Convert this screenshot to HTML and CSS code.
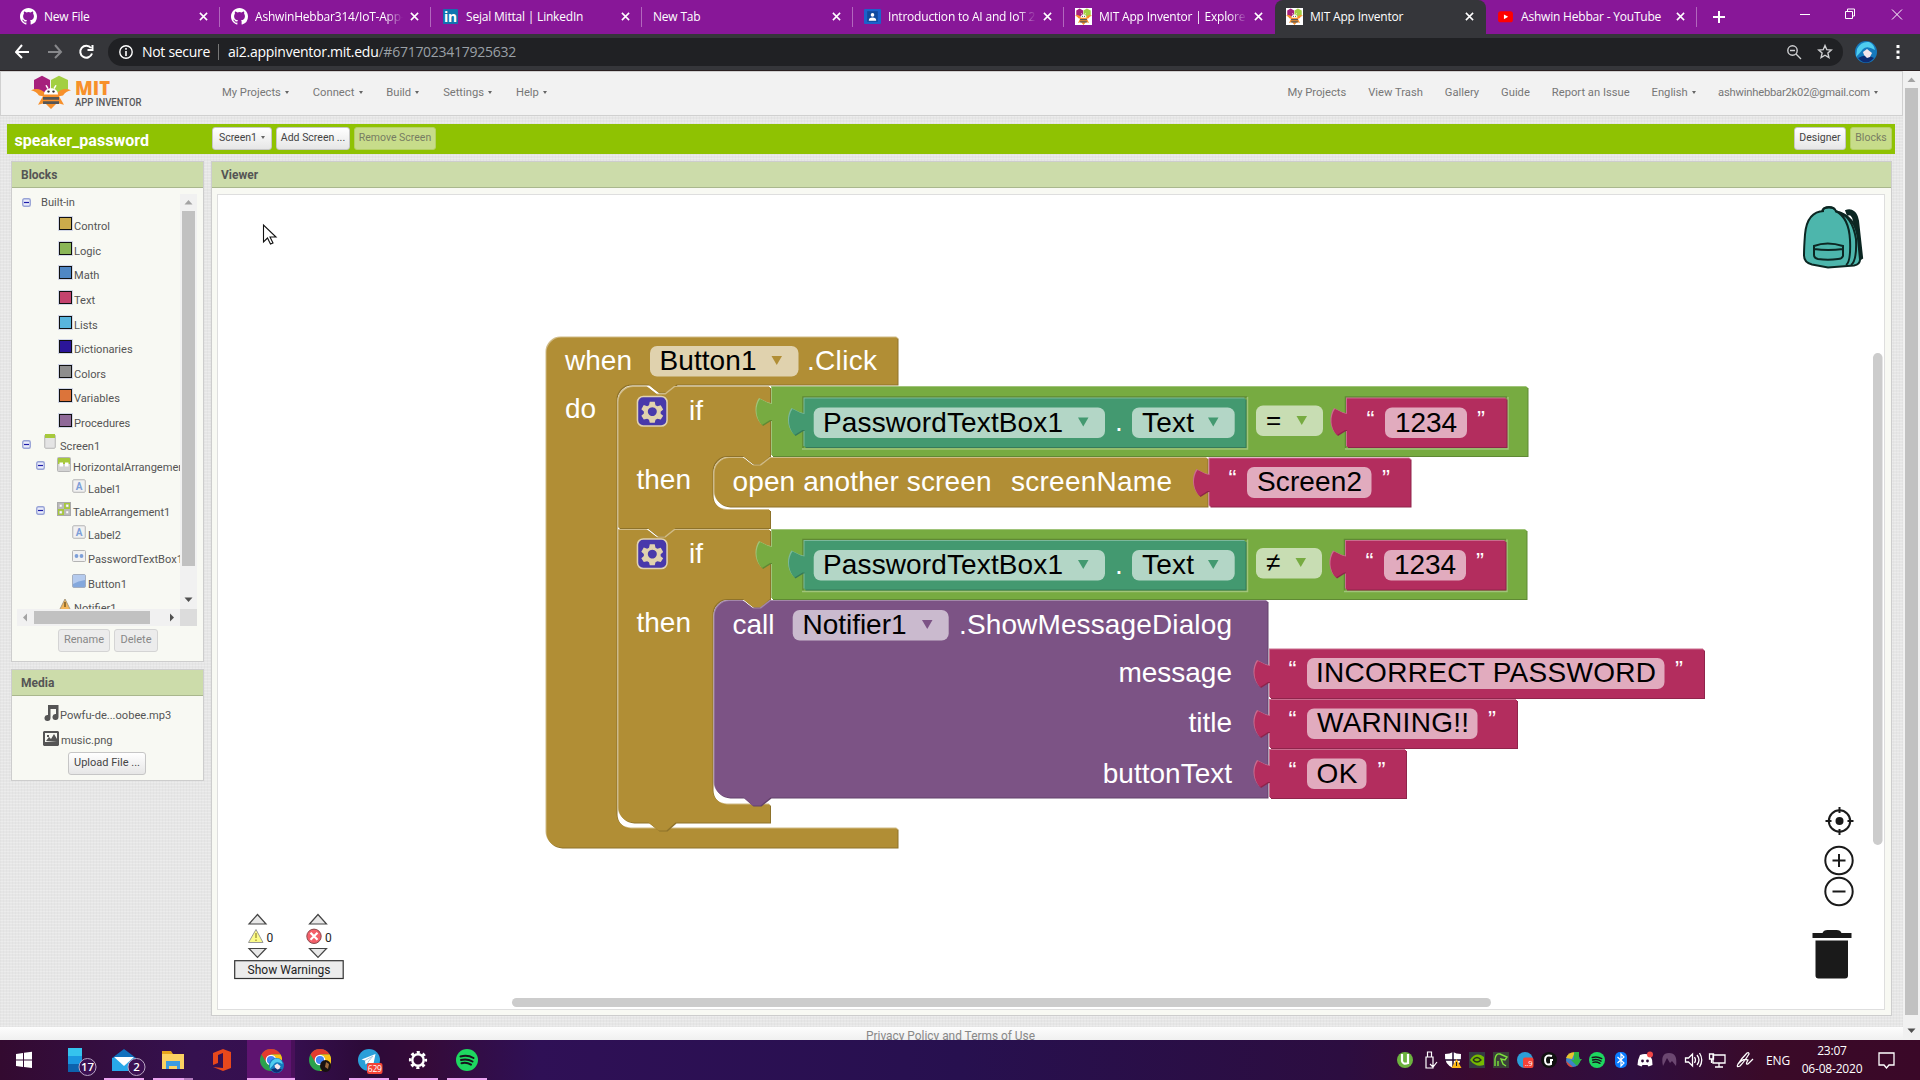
FILE: index.html
```html
<!DOCTYPE html>
<html lang="en">
<head>
<meta charset="utf-8">
<title>MIT App Inventor</title>
<link rel="stylesheet" href="styles.css">
</head>
<body>
<svg class="defs" width="0" height="0">
  <defs>
    <symbol id="github" viewBox="0 0 16 16"><path fill="#fff" d="M8 0C3.58 0 0 3.58 0 8c0 3.54 2.29 6.53 5.47 7.59.4.07.55-.17.55-.38 0-.19-.01-.82-.01-1.49-2.01.37-2.53-.49-2.69-.94-.09-.23-.48-.94-.82-1.13-.28-.15-.68-.52-.01-.53.63-.01 1.08.58 1.23.82.72 1.21 1.87.87 2.33.66.07-.52.28-.87.51-1.07-1.78-.2-3.64-.89-3.64-3.95 0-.87.31-1.59.82-2.15-.08-.2-.36-1.02.08-2.12 0 0 .67-.21 2.2.82a7.6 7.6 0 0 1 4 0c1.53-1.04 2.2-.82 2.2-.82.44 1.1.16 1.92.08 2.12.51.56.82 1.27.82 2.15 0 3.07-1.87 3.75-3.65 3.95.29.25.54.73.54 1.48 0 1.07-.01 1.93-.01 2.2 0 .21.15.46.55.38A8 8 0 0 0 16 8c0-4.42-3.58-8-8-8z"/></symbol>
    <symbol id="bee" viewBox="0 0 40 40"><path fill="#a6207c" d="M3 6 11 1l8 5v11l-8 5-8-5z"/><path fill="#a3cf42" d="M20 6l8-5 9 5v11l-9 5-8-5z"/><path fill="#f7902b" d="M0 18q8-4 14 3h12q6-7 14-3-5 1-8 6l-4 1 5 10-7-2-6 7-6-7-7 2 5-10-4-1q-3-5-8-6z"/><path fill="#fff" d="M13 23c0-10 14-10 14 0z"/><path fill="#555" d="M12 26h16v3H12zm0 5h16v3H12z"/><circle cx="17.500" cy="19.500" r="1.300" fill="#333"/><circle cx="22.500" cy="19.500" r="1.300" fill="#333"/><path d="m17 16-2-4m8 4 2-4" stroke="#fff" stroke-width="1.500"/></symbol>
    <symbol id="close" viewBox="0 0 10 10"><path d="m1 1 8 8m0-8-8 8" stroke="#fff" stroke-width="1.700"/></symbol>
    <symbol id="minus-box" viewBox="0 0 9 9"><rect x=".75" y=".75" width="7.500" height="7.500" rx="1.500" fill="#e9ecfa" stroke="#98a3d6" stroke-width="1.400"/><path d="M2 4.500h5" stroke="#1c1ca8" stroke-width="1.200"/></symbol>
    <symbol id="label" viewBox="0 0 14 14"><rect x=".75" y=".75" width="12.500" height="12.500" rx="1" fill="#f1f1f1" stroke="#b4b4b4"/><text x="7" y="10.500" text-anchor="middle" font-size="10" font-weight="700" fill="#7d9fd8" font-family="Roboto,sans-serif">A</text></symbol>
    <symbol id="spotify" viewBox="0 0 22 22"><circle cx="11" cy="11" r="11" fill="#1ed760"/><path d="M4.500 7.500q7-2 13 1.500M5 11q6-1.700 11.500 1.500M5.500 14.300q5-1.300 9.500 1.300" fill="none" stroke="#18121c" stroke-width="2" stroke-linecap="round"/></symbol>
    <symbol id="chrome" viewBox="0 0 22 22"><circle cx="11" cy="11" r="11" fill="#2ba24c"/><path fill="#e33b2e" d="M11 0a11 11 0 0 1 9.600 5.500H11L6.500 13.500 1.500 5.400A11 11 0 0 1 11 0z"/><path fill="#fbc116" d="M20.600 5.500A11 11 0 0 1 11 22l5-8.500L15.500 8 11 5.500z"/><circle cx="11" cy="11" r="5.300" fill="#fff"/><circle cx="11" cy="11" r="4.100" fill="#4285f4"/></symbol>
    <symbol id="telegram" viewBox="0 0 22 22"><circle cx="11" cy="11" r="11" fill="#2b9fd9"/><path fill="#fff" d="m3.500 10.500 14-5.500-2.500 12-5-3.500-2.500 2-.5-4z"/><path d="m7 11.500 8-4.500-5 6" fill="none" stroke="#a9c9dd"/></symbol>
    <symbol id="avatar" viewBox="0 0 22 22"><circle cx="11" cy="11" r="11" fill="#1679bd"/><path fill="#4ecdf0" d="M2 8q4-8 12-7 5 2 6 8-8-5-12-1-3 4-7 8z"/><path fill="#0d2c73" d="M3 17q8-5 16 0-8 9-16 0z"/><path fill="#f5e5ea" d="m8 11 4-3 5 4-2 4-3 1-3-3z"/></symbol>
    <symbol id="gear" viewBox="0 0 34 34"><rect x="1.500" y="1.500" width="30.500" height="30.500" rx="6" fill="#4839ab" stroke="#e0d2b2" stroke-width="1.600"/><path fill="#e0d2ae" fill-rule="evenodd" d="M14.200 7h5.100l.8 3.500 1.900 1.100 3.500-1.100 2.500 4.400-2.600 2.300v2l2.600 2.300-2.500 3.800-3.500-.9-1.900 1.100-.8 3.200h-5.100l-.8-3.200-1.900-1.100-3.500.9-2.500-3.800L8.100 19v-2l-2.600-2.300L8 10.400l3.500 1.200 1.900-1.100zM16.800 12.500a4.600 4.600 0 1 0 .01 0z"/></symbol>

    <path id="b-when" d="M560.500 336.500H896.500V383.500H675.500l-9 8h-9l-10-8H630.500a15 15 0 0 0-15 15V812.500a15 15 0 0 0 15 15H896.500V846.500H560.500a15 15 0 0 1-15-15V351.500a15 15 0 0 1 15-15z"/>
    <path id="b-if1" d="M617.500 527V401a15 15 0 0 1 15-15H646.500l9.500 7.500h8.500l9.500-7.500H769V455l-9 8h-8l-10-8H726.500a15 15 0 0 0-15 15V494a15 15 0 0 0 15 15H769V527H674.500l-9 8h-9l-10-8z"/>
    <path id="b-if2" d="M617.500 529H646.500l9.500 7.500h8.500l9.500-7.500H769V598l-9 8h-8l-10-8H726.500a15 15 0 0 0-15 15V788.500a15 15 0 0 0 15 15H769V821.500H674.500l-9 8h-8l-10-8H632.500a15 15 0 0 1-15-15z"/>
    <path id="b-open" d="M728.500 457H742.500l9.500 7.500h8l9.500-7.500H1206.500V505.500H728.500a15 15 0 0 1-15-15V472a15 15 0 0 1 15-15z"/>
    <path id="b-call" d="M728.500 600H742.500l9.500 7.500h8l9.500-7.500H1266.500V796.500H769.500l-10 8h-8l-9-8H728.500a15 15 0 0 1-15-15V615a15 15 0 0 1 15-15z"/>
    <path id="b-eq" d="M771 386H1526.500V455H771V419h-2l-8 5c-7-7-7-19-2-26l8 4 4 1z"/>
    <path id="b-neq" d="M771 529H1525.500V598H771V562h-2l-8 5c-7-7-7-19-2-26l8 4 4 1z"/>
    <path id="b-prop" d="M803.500 397.500H1244.500V446H803.500V429h-2l-8 5c-7-7-7-19-2-26l8 4 4 1z"/>
    <path id="b-num" d="M1346 397.500H1505.500V446H1346V429h-2l-8 5c-7-7-7-19-2-26l8 4 4 1z"/>
    <path id="b-scr" d="M1208.500 457.500H1409.500V505.500H1208.500V490h-2l-8 5c-7-7-7-19-2-26l8 4 4 1z"/>
    <path id="b-msg" d="M1269 648.500H1703V697H1269V681h-2l-8 5c-7-7-7-19-2-26l8 4 4 1z"/>
    <path id="b-title" d="M1269 699H1516V747H1269V731h-2l-8 5c-7-7-7-19-2-26l8 4 4 1z"/>
    <path id="b-ok" d="M1269 749H1405V797H1269V781h-2l-8 5c-7-7-7-19-2-26l8 4 4 1z"/>
    <path id="arrow" d="M-5.500-4H5L-.25 5z"/>
  </defs>
</svg>

<header class="tabs">
  <div class="tab"><svg class="fav" width="17" height="17"><use href="#github"/></svg><span>New File</span><svg class="x"><use href="#close"/></svg></div>
  <div class="tab"><svg class="fav" width="17" height="17"><use href="#github"/></svg><span class="fade">AshwinHebbar314/IoT-App-</span><svg class="x"><use href="#close"/></svg></div>
  <div class="tab"><svg class="fav" width="16" height="16" viewBox="0 0 16 16"><path fill="#0f75b0" d="M1 1h14v14H1z"/><text x="8" y="13" text-anchor="middle" font-size="13" font-weight="700" fill="#fff" font-family="Open Sans,sans-serif">in</text></svg><span>Sejal Mittal | LinkedIn</span><svg class="x"><use href="#close"/></svg></div>
  <div class="tab bare"><span>New Tab</span><svg class="x"><use href="#close"/></svg></div>
  <div class="tab"><svg class="fav" width="16" height="16" viewBox="0 0 16 16"><rect y="1" width="16" height="14" rx="1" fill="#1b62cb"/><path fill="#104a9d" d="M3 3h10v10H3z"/><circle cx="8" cy="6.500" r="1.700" fill="#fff"/><path fill="#fff" d="M4.500 12q0-3 3.500-3t3.500 3z"/></svg><span class="fade">Introduction to AI and IoT 2</span><svg class="x"><use href="#close"/></svg></div>
  <div class="tab last"><svg class="fav onwhite" width="16" height="16"><use href="#bee"/></svg><span class="fade">MIT App Inventor | Explore M</span><svg class="x"><use href="#close"/></svg></div>
  <div class="tab active"><svg class="fav onwhite" width="16" height="16"><use href="#bee"/></svg><span>MIT App Inventor</span><svg class="x"><use href="#close"/></svg></div>
  <div class="tab"><svg class="fav" width="16" height="16" viewBox="0 0 16 16"><rect x="1" y="3" width="14" height="10.500" rx="2.500" fill="#f00"/><path fill="#fff" d="m6.500 6 4 2.300-4 2.300z"/></svg><span>Ashwin Hebbar - YouTube</span><svg class="x"><use href="#close"/></svg></div>
  <svg class="newtab" width="12" height="12"><path d="M6 0v12M0 6h12" stroke="#fff" stroke-width="2"/></svg>
  <svg class="winctl" width="110" height="28" viewBox="0 0 110 28"><g fill="none" stroke="#fff"><path d="M6 14.500h10M51.500 11.500h7v7h-7zM53.500 11v-2h7v7h-2M98 9.500l10 10m0-10-10 10"/></g></svg>
</header>

<nav class="toolbar">
  <svg width="96" height="24" viewBox="0 0 96 24"><g fill="none" stroke="#fff" stroke-width="2"><path d="M14 12H1m6-7-6 7 6 6"/><path d="M33 12h13m-6-7 6 7-6 6" stroke="#87888b"/><path d="M76 8a6 6 0 1 0 1 5.500M77.500 5v5h-5"/></g></svg>
  <div class="omnibox">
    <svg width="14" height="14" viewBox="0 0 14 14"><circle cx="7" cy="7" r="6.200" fill="none" stroke="#fff" stroke-width="1.400"/><path d="M7 6v5M7 3v1.700" stroke="#fff" stroke-width="1.600"/></svg>
    <span class="secure">Not secure</span><span class="url"><b>ai2.appinventor.mit.edu</b>/#6717023417925632</span>
    <svg class="obicons" width="48" height="18" viewBox="0 0 48 18"><g fill="none" stroke="#cfd0d2" stroke-width="1.400"><circle cx="6.500" cy="7.500" r="4.700"/><path d="m10 11 5 5M4 7.500h5"/><path d="m39 2.500 1.800 4.200 4.500.4-3.400 3 1 4.400-3.900-2.300-3.900 2.300 1-4.400-3.400-3 4.500-.4z"/></g></svg>
  </div>
  <svg class="avatar" width="22" height="22"><use href="#avatar"/></svg>
  <svg width="4" height="14" viewBox="0 0 4 14"><path fill="#fff" d="M.5 0h3v3h-3zm0 5.500h3v3h-3zm0 5.500h3v3h-3z"/></svg>
</nav>

<div class="page">
  <div class="content">
    <div class="menubar">
      <svg class="logo" width="114" height="36" viewBox="0 0 114 36"><svg x="0" y="0" width="40" height="34" preserveAspectRatio="none" viewBox="0 0 40 40"><use href="#bee"/></svg><text x="44" y="19.500" textLength="35" lengthAdjust="spacingAndGlyphs" font-size="20" font-weight="800" fill="#f7902b">MIT</text><text x="44" y="31" textLength="66.500" lengthAdjust="spacingAndGlyphs" font-size="10.500" font-weight="500" fill="#58585a" font-family="Roboto,sans-serif">APP INVENTOR</text></svg>
      <div class="menu left"><span>My Projects <i></i></span><span>Connect <i></i></span><span>Build <i></i></span><span>Settings <i></i></span><span>Help <i></i></span></div>
      <div class="menu right"><span>My Projects</span><span>View Trash</span><span>Gallery</span><span>Guide</span><span>Report an Issue</span><span>English <i></i></span><span class="mail">ashwinhebbar2k02@gmail.com <i></i></span></div>
    </div>

    <div class="project">
      <h1>speaker_password</h1>
      <button class="btn w60">Screen1 <i></i></button><button class="btn w74">Add Screen ...</button><button class="btn off w82">Remove Screen</button>
      <button class="btn push w52">Designer</button><button class="btn off w42">Blocks</button>
    </div>

    <main class="columns">
      <aside>
        <section class="panel blocks">
          <h2>Blocks</h2>
          <div class="pane">
            <div class="tree">
              <div class="row builtin"><svg class="tg"><use href="#minus-box"/></svg><span>Built-in</span></div>
              <div class="row cat"><b class="sw control"></b><span>Control</span></div>
              <div class="row cat"><b class="sw logic"></b><span>Logic</span></div>
              <div class="row cat"><b class="sw math"></b><span>Math</span></div>
              <div class="row cat"><b class="sw text"></b><span>Text</span></div>
              <div class="row cat"><b class="sw lists"></b><span>Lists</span></div>
              <div class="row cat"><b class="sw dict"></b><span>Dictionaries</span></div>
              <div class="row cat"><b class="sw colors"></b><span>Colors</span></div>
              <div class="row cat"><b class="sw vars"></b><span>Variables</span></div>
              <div class="row cat"><b class="sw procs"></b><span>Procedures</span></div>
              <div class="row screen"><svg class="tg"><use href="#minus-box"/></svg><svg class="ic" width="12" height="15" viewBox="0 0 12 15"><rect x=".75" y=".75" width="10.500" height="13.500" rx="1" fill="#e4e4e4" stroke="#b5b5b5"/><path fill="#a7c93c" d="M1 0h10v4H1z"/></svg><span>Screen1</span></div>
              <div class="row harr"><svg class="tg"><use href="#minus-box"/></svg><svg class="ic" width="14" height="15" viewBox="0 0 14 15"><rect x=".5" y=".5" width="13" height="14" rx="1" fill="#d3d3d3" stroke="#b5b5b5"/><path fill="#a7c93c" d="M1 1h12v6H1z"/><path fill="#fff" d="M2.500 5.500h3.500v4H2.500zm5.500 0h3.500v4H8z"/></svg><span>HorizontalArrangement1</span></div>
              <div class="row leaf h22"><svg class="ic" width="14" height="14"><use href="#label"/></svg><span>Label1</span></div>
              <div class="row tarr"><svg class="tg"><use href="#minus-box"/></svg><svg class="ic" width="14" height="14" viewBox="0 0 14 14"><rect x=".5" y=".5" width="13" height="13" fill="#b9b9b9" stroke="#aaa"/><path fill="#a7c93c" d="M7 1h6v6H7zM1 7h6v6H1z"/><path fill="#fff" stroke="#bbb" stroke-width=".5" d="M2.500 2.500H5V5H2.500zm6.500 0h2.500V5H9zM2.500 9H5v2.500H2.500zM9 9h2.500v2.500H9z"/></svg><span>TableArrangement1</span></div>
              <div class="row leaf h22"><svg class="ic" width="14" height="14"><use href="#label"/></svg><span>Label2</span></div>
              <div class="row leaf h26"><svg class="ic" width="14" height="12" viewBox="0 0 14 12"><rect x=".5" y=".5" width="13" height="11" rx="1" fill="#f1f1f1" stroke="#b4b4b4"/><circle cx="4.500" cy="6" r="1.900" fill="#7d9fd8"/><circle cx="9.500" cy="6" r="1.900" fill="#7d9fd8"/></svg><span>PasswordTextBox1</span></div>
              <div class="row leaf h24"><svg class="ic" width="14" height="14" viewBox="0 0 14 14"><rect x=".5" y=".5" width="13" height="13" rx="1.500" fill="#84a8dc" stroke="#a5afc0"/><path fill="#b5cbee" d="M1 1h12v5Q6 7 1 10z"/></svg><span>Button1</span></div>
              <div class="row note h24"><svg class="ic" width="14" height="14" viewBox="0 0 14 14"><path fill="#f3b65a" stroke="#a89a80" d="m7 1 6 12H1z"/><path stroke="#7a5a20" d="M7 4v5" stroke-width="1.500"/></svg><span>Notifier1</span></div>
            </div>
            <div class="vsb"><svg width="17" height="415" viewBox="0 0 17 415"><path fill="#a3a3a3" d="m8.500 6 4 4.500h-8z"/><path fill="#c1c1c1" d="M2 17h13v355H2z"/><path fill="#505050" d="m8.500 408-4-4.500h8z"/></svg></div>
            <div class="hsb"><svg width="163" height="17" viewBox="0 0 163 17"><path fill="#a3a3a3" d="m6 8.500 4-4v8z"/><path fill="#c1c1c1" d="M17 2h116v13H17z"/><path fill="#505050" d="m157 8.500-4-4v8z"/></svg></div>
            <div class="corner"></div>
          </div>
          <div class="acts"><button class="btn off w52b">Rename</button><button class="btn off w43">Delete</button></div>
        </section>
        <section class="panel media">
          <h2>Media</h2>
          <div class="file"><svg width="16" height="16" viewBox="0 0 16 16"><path fill="#555" d="M5 0h10.500v12a3 3 0 1 1-2.500-3V4H7.500v9A3 3 0 1 1 5 10z"/></svg><span>Powfu-de...oobee.mp3</span></div>
          <div class="file two"><svg width="16" height="15" viewBox="0 0 16 15"><path fill="#555" fill-rule="evenodd" d="M1 0h14l1 1v13l-1 1H1l-1-1V1zm1 2v9h12V2zm1 8 3-4 2 2 3-5 3 5v3zm1-6h2v2H4z"/></svg><span>music.png</span></div>
          <button class="btn up">Upload File ...</button>
        </section>
      </aside>

      <section class="panel viewer">
        <h2>Viewer</h2>
        <div class="workspace">
          <svg class="canvas" width="1666" height="814" viewBox="218 195 1666 814">
            <g class="control"><use href="#b-when" class="lt"/><use href="#b-when" class="dk"/><use href="#b-when"/></g>
            <g class="control"><use href="#b-if1" class="lt"/><use href="#b-if1" class="dk"/><use href="#b-if1"/></g>
            <g class="control"><use href="#b-if2" class="lt"/><use href="#b-if2" class="dk"/><use href="#b-if2"/></g>
            <g class="control"><use href="#b-open" class="lt"/><use href="#b-open" class="dk"/><use href="#b-open"/></g>
            <g class="proc"><use href="#b-call" class="lt"/><use href="#b-call" class="dk"/><use href="#b-call"/></g>
            <g class="logic"><use href="#b-eq" class="lt"/><use href="#b-eq" class="dk"/><use href="#b-eq"/></g>
            <g class="logic"><use href="#b-neq" class="lt"/><use href="#b-neq" class="dk"/><use href="#b-neq"/></g>
            <g class="rim"><path class="d" d="M803 448V397H1247M1345.500 448V397H1507M803 590.500V539.500H1247M1344.500 590.500V539.500H1506"/><path class="l" d="M1247.500 397V449H802M1508 397V449H1345M1247.500 539.500V591.500H802M1507 539.500V591.500H1344"/></g>
            <g class="prop"><use href="#b-prop" class="lt"/><use href="#b-prop" class="dk"/><use href="#b-prop"/></g>
            <g class="prop" transform="translate(0 142.500)"><use href="#b-prop" class="lt"/><use href="#b-prop" class="dk"/><use href="#b-prop"/></g>
            <g class="str"><use href="#b-num" class="lt"/><use href="#b-num" class="dk"/><use href="#b-num"/></g>
            <g class="str" transform="translate(-1 142.500)"><use href="#b-num" class="lt"/><use href="#b-num" class="dk"/><use href="#b-num"/></g>
            <g class="str"><use href="#b-scr" class="lt"/><use href="#b-scr" class="dk"/><use href="#b-scr"/></g>
            <g class="str"><use href="#b-msg" class="lt"/><use href="#b-msg" class="dk"/><use href="#b-msg"/></g>
            <g class="str"><use href="#b-title" class="lt"/><use href="#b-title" class="dk"/><use href="#b-title"/></g>
            <g class="str"><use href="#b-ok" class="lt"/><use href="#b-ok" class="dk"/><use href="#b-ok"/></g>

            <g class="field">
              <rect x="650" y="346" width="148.500" height="30.500" rx="7"/>
              <rect x="813.700" y="407.500" width="291.300" height="30.500" rx="7"/><rect x="1132" y="407.500" width="102.700" height="30.500" rx="7"/><rect x="1256" y="405.500" width="67" height="30.500" rx="7"/><rect x="1385" y="407.500" width="82" height="30.500" rx="7"/>
              <rect x="1247" y="467" width="124.500" height="31" rx="7"/>
              <rect x="813.700" y="550" width="291.300" height="30.500" rx="7"/><rect x="1132" y="550" width="102.700" height="30.500" rx="7"/><rect x="1256" y="548" width="66" height="30.500" rx="7"/><rect x="1384" y="550" width="82" height="30.500" rx="7"/>
              <rect x="792.700" y="610" width="156" height="30.500" rx="7"/>
              <rect x="1307" y="658" width="357.500" height="31" rx="7"/><rect x="1307" y="708.500" width="170.500" height="30.500" rx="7"/><rect x="1307" y="758.500" width="59.500" height="30.500" rx="7"/>
            </g>
            <use href="#gear" x="635.500" y="395" width="34" height="33"/><use href="#gear" x="635.500" y="537.500" width="34" height="33"/>
            <g class="control"><use href="#arrow" x="777" y="360"/></g>
            <g class="prop"><use href="#arrow" x="1083.500" y="421.500"/><use href="#arrow" x="1213.500" y="421.500"/><use href="#arrow" x="1083.500" y="564"/><use href="#arrow" x="1213.500" y="564"/></g>
            <g class="logic"><use href="#arrow" x="1302" y="420"/><use href="#arrow" x="1301" y="562"/></g>
            <g class="proc"><use href="#arrow" x="927.500" y="624"/></g>
            <g class="bt">
              <text x="565" y="370" textLength="67">when</text><text x="807" y="370" textLength="70">.Click</text><text x="565" y="417.500">do</text>
              <text x="689" y="419.500">if</text><text x="636.500" y="489">then</text><text x="689" y="562.500">if</text><text x="636.500" y="632">then</text>
              <text x="732.500" y="490.500" textLength="259">open another screen</text><text x="1011" y="490.500" textLength="161">screenName</text>
              <text x="1115" y="431">.</text><text x="1115" y="574">.</text>
              <text x="732.500" y="633.500">call</text><text x="959" y="633.500" textLength="273">.ShowMessageDialog</text>
              <text x="1232" y="681.500" text-anchor="end">message</text><text x="1232" y="732" text-anchor="end">title</text><text x="1232" y="782.500" text-anchor="end">buttonText</text>
            </g>
            <g class="q">
              <text x="1370.500" y="427.500">“</text><text x="1481" y="427.500">”</text><text x="1232.500" y="486.500">“</text><text x="1386" y="486.500">”</text><text x="1369.500" y="570">“</text><text x="1480" y="570">”</text>
              <text x="1292.500" y="677.500">“</text><text x="1679" y="677.500">”</text><text x="1292.500" y="728">“</text><text x="1492" y="728">”</text><text x="1292.500" y="779">“</text><text x="1381.500" y="779">”</text>
            </g>
            <g class="ft">
              <text x="659.500" y="370" textLength="97">Button1</text>
              <text x="823" y="431.500" textLength="240">PasswordTextBox1</text><text x="1142" y="431.500" textLength="52">Text</text><text x="1266" y="428.500" font-size="26">=</text><text x="1395" y="431.500" textLength="62">1234</text>
              <text x="1257" y="490.500" textLength="105">Screen2</text>
              <text x="823" y="574" textLength="240">PasswordTextBox1</text><text x="1142" y="574" textLength="52">Text</text><text x="1266" y="571" font-size="26">≠</text><text x="1394" y="574" textLength="62">1234</text>
              <text x="802.500" y="633.500" textLength="104">Notifier1</text>
              <text x="1316" y="681.500" textLength="340">INCORRECT PASSWORD</text><text x="1317" y="732" textLength="152">WARNING!!</text><text x="1316.500" y="782.500" textLength="41">OK</text>
            </g>

            <g stroke="#0c2622" stroke-width="2" transform="translate(0 1)"><path fill="none" stroke-width="6" d="M1846 212q8-3 10 8l4 36-6 4-4-1"/><path fill="#4db6ac" d="M1822 210q1-3.500 7-3.500t7 4q19 4 22 27l2 21q0 5-6 6l-26 2-16-3q-8-2-8-9 0-8 1-21 2-23 19-23.500z"/><path fill="none" d="M1823 209q1-3 6-3t6 3M1836 210q13 7 14 29t-4 25m-9-53q15 3 19 27 1 22-5 26"/><path fill="#4db6ac" d="M1814 245q13-5 29 0v10q-1 3-5 3-10 1.500-20 0-4-1-4-4zM1814 248q14 2 29 0"/></g>
            <rect x="1873" y="353" width="9.500" height="492" rx="4.700" fill="#ccc"/><rect x="512" y="998" width="979" height="9" rx="4.500" fill="#ccc"/>
            <g fill="none" stroke="#1a1a1a" stroke-width="2"><circle cx="1839.500" cy="821" r="10.700"/><path d="M1839.500 807v6m0 16v6m-14-14h6m16 0h6"/><circle cx="1839" cy="860.500" r="13.700"/><path d="M1839 854v13m-6.500-6.500h13"/><circle cx="1839" cy="891.500" r="13.700"/><path d="M1832.500 891.500h13"/></g><circle cx="1839.500" cy="821" r="4" fill="#1a1a1a"/>
            <path fill="#1a1a1a" d="M1812.500 933h10q1-3 5-3h9q4 0 5 3h10v5h-39zM1815.500 940.500h32.500v35q0 3-3 3h-26.500q-3 0-3-3z"/>
            <g fill="#e8e8e8" stroke="#444" stroke-width="1.200"><path d="m257.500 914.500 8.500 9.500h-17zM318 914.500l8.500 9.500h-17zM249 948.500h17l-8.500 9zM309.500 948.500h17l-8.500 9z"/></g>
            <path d="m256 929.500 7 13h-14.500z" fill="#fbfb8b" stroke="#999" stroke-linejoin="round"/><path d="M256 933v5m0 1.500v1.500" stroke="#aaa03a" stroke-width="1.500"/>
            <circle cx="314" cy="936.300" r="7.200" fill="#f4606a" stroke="#8b4a4e"/><path d="m310.500 932.800 7 7m0-7-7 7" stroke="#fff" stroke-width="2.200"/>
            <g class="wt"><text x="266.500" y="941.500">0</text><text x="325" y="941.500">0</text><rect x="234.700" y="960.700" width="108.500" height="17.800" fill="#ececec" stroke="#333" stroke-width="1.200"/><text x="247.500" y="974" textLength="83">Show Warnings</text></g>
            <path d="M263.500 225v17l4-4 3 6 2.500-1-3-6h6z" fill="#fff" stroke="#111" stroke-width="1.100"/>
          </svg>
        </div>
      </section>
    </main>
    <footer>Privacy Policy and Terms of Use</footer>
  </div>
  <div class="scroll"><svg width="17" height="969" viewBox="0 0 17 969"><path fill="#a3a3a3" d="m8.500 6.500 4 4.500h-8z"/><path fill="#c1c1c1" d="M2 17h13v927H2z"/><path fill="#505050" d="m8.500 962-4-4.500h8z"/></svg></div>
</div>

<div class="taskbar">
  <svg class="apps" width="500" height="40" viewBox="0 0 500 40">
    <path fill="#5e1470" d="M247 0h48v40h-48z"/><path fill="#49105a" d="M291 0h4v37h-4z"/>
    <path fill="#fff" d="m16 14 7-1v6.500h-7zm8-1.200 8-1v7.700h-8zM16 20.500h7V27l-7-1zm8 0h8V28l-8-1z"/>
    <path fill="#35c3ee" d="M68 8h14v8H68z"/><path fill="#1b97e0" d="M68 16h14v8H68z"/><path fill="#0d62ad" d="M68 24h14v8H68z"/>
    <path fill="#1170bd" d="m112 18 12-9 12 9v3h-24z"/><path fill="#28a8ea" d="M112 18h24v13h-24z"/><path fill="#fff" d="M114 17h20l-10 9z"/>
    <path fill="#e6a51c" d="M162 11h9l2 3h11v6h-22z"/><path fill="#fbd161" d="M162 14h22v15h-22z"/><path fill="#3b9be0" d="M166 21h14v8h-3v-3h-8v3h-3z"/>
    <path fill="#e8481c" d="m223 9 8 3v16l-8 3-10-4 10 1V13l-5 2v8l-5 2V13z"/>
    <use href="#chrome" x="260" y="9" width="22" height="22"/><use href="#avatar" x="269" y="18" width="15" height="15"/>
    <use href="#chrome" x="309" y="9" width="22" height="22"/><ellipse cx="325.500" cy="26" rx="5.500" ry="6" fill="#17120f"/><path d="m326 22 3 2-1 5-3-2z" fill="#9b6a3c"/>
    <use href="#telegram" x="358" y="9" width="22" height="22"/><rect x="367" y="23" width="15.500" height="11" rx="2" fill="#f44336"/><text x="374.800" y="32" text-anchor="middle" font-size="8.500" fill="#fff" font-family="Open Sans,sans-serif">629</text>
    <circle cx="418" cy="20" r="5.700" fill="none" stroke="#fff" stroke-width="2.400"/><circle cx="418" cy="20" r="7.800" fill="none" stroke="#fff" stroke-width="2.600" stroke-dasharray="3.100 3.025" stroke-dashoffset="1.500"/>
    <use href="#spotify" x="456" y="9" width="22" height="22"/>
    <g fill="#3c1153" stroke="#b9a6c4"><circle cx="87.500" cy="27" r="8.500"/><circle cx="136.500" cy="27" r="8.500"/></g><g fill="#fff" font-size="11.500" text-anchor="middle" font-family="Open Sans,sans-serif" font-weight="600"><text x="87.500" y="31">17</text><text x="136.500" y="31">2</text></g>
    <path fill="#eba4f0" d="M104 38h40v2h-40zM153 38h31v2h-31zM247 38h48v2h-48zM349 38h40v2h-40zM398 38h40v2h-40zM447 38h40v2h-40z"/><path fill="#b27bbd" d="M184 38h9v2h-9z"/>
  </svg>
  <svg class="tray" width="365" height="40" viewBox="1395 0 365 40">
    <circle cx="1405" cy="20" r="8" fill="#6db33f"/><path d="M1402 14v7q1 4 6 2m0-9v10" fill="none" stroke="#fff" stroke-width="2.200"/>
    <g fill="none" stroke="#fff" stroke-width="1.200"><path d="M1426 17h7v11h-7zM1427.500 17v-5h4v5M1430 24l3 3 4-5"/></g>
    <path fill="#fff" d="M1445 14q5 0 8-2 3 2 8 2 1 10-8 14-9-4-8-14z"/><path d="M1453 12v16m-8-8h16" stroke="#220b33" stroke-width="1.500"/><path fill="#fbb516" d="m1456.500 19 5 9h-10z"/><path d="M1456.500 22v4" stroke="#222"/>
    <path fill="#343b43" d="M1469 12h16v16h-16z"/><path fill="#76b900" d="M1470 20q6-9 14-3v8q-8 3-14-5z"/><path d="M1473 20q4-5 8 0-4 4-8 0" fill="none" stroke="#26331a" stroke-width="1.300"/>
    <path fill="#3a4038" d="M1493 12h16v16h-16z"/><path d="M1495 26v-7q1-6 5-5l7 3-2 3-4-1 2 5 3 2M1498 21v5" fill="none" stroke="#7de03c" stroke-width="1.400"/>
    <circle cx="1525" cy="20" r="8" fill="#2b9fd9"/><rect x="1523" y="17.500" width="10.500" height="10.500" rx="2" fill="#f44336"/><text x="1528.500" y="26" text-anchor="middle" font-size="7.500" fill="#fff" font-family="Open Sans,sans-serif">..9</text>
    <circle cx="1549" cy="20" r="8" fill="#111"/><path d="M1552 16q-7-2-7 4t6 4v-4h2" fill="none" stroke="#fff" stroke-width="2"/>
    <circle cx="1573" cy="20" r="7" fill="#3d83c9"/><path fill="#e6c42d" d="M1566 18q2-6 9-6l-3 7z"/><path fill="#d84a3a" d="M1566 21l7 6q-5 1-7-6z"/><path fill="#2eb344" d="M1574 12h5v7h3l-5 7-6-6h3z"/>
    <use href="#spotify" x="1589" y="12" width="16" height="16"/>
    <rect x="1615" y="12" width="12" height="16" rx="5" fill="#0a7cff"/><path d="m1617.500 17 6.500 6-3 3V14l3 3-6.500 6" fill="none" stroke="#fff" stroke-width="1.200"/>
    <path fill="#fff" d="M1640 15q5-2 10 0 3 5 2.500 10l-4 1.500-1-1.500h-5l-1 1.500-4-1.500q0-5 2.500-10z"/><circle cx="1642.500" cy="21" r="1.400" fill="#2d0c38"/><circle cx="1647.500" cy="21" r="1.400" fill="#2d0c38"/><circle cx="1650" cy="14.500" r="3" fill="#f04747"/>
    <path fill="#6b4770" d="M1663 26q-3-13 6-13t7 13l-4-5-2 2-3-5-2 4z"/>
    <g fill="none" stroke="#fff" stroke-width="1.300"><path d="M1685.500 18h3l4-4v12l-4-4h-3zM1694.500 17q2 3 0 6M1697 15q4 5 0 10M1699.500 13q4.500 7 0 14"/><path d="M1713 15h12v8h-12zM1719 23v4m-4 0h8M1709.500 14h4v5h-4zM1711.500 19v4"/><path d="M1738 24q3-5 9-11 2-1 2 1-5 8-9 12-4 2-2-2 5-6 10-4-3 5 0 4l5-5"/></g>
  </svg>
  <span class="lang">ENG</span><span class="clock">23:07<br>06-08-2020</span>
  <svg class="notif" width="17" height="17" viewBox="0 0 17 17"><path d="M1 1h15v12h-5l-2.500 3-2.500-3H1z" fill="none" stroke="#fff" stroke-width="1.300"/></svg>
</div>
</body>
</html>
```
FILE: styles.css
```css
* { box-sizing: border-box; }
body { margin: 0; width: 1920px; height: 1080px; overflow: hidden; display: flex; flex-direction: column; font-family: Roboto, sans-serif; font-size: 11px; color: #555; }
svg { display: block; flex: none; }
.defs { position: absolute; }
h1, h2 { margin: 0; }

.tabs { height: 34px; flex: none; display: flex; align-items: center; background: #881798; padding-left: 9px; }
.tab { width: 211px; height: 34px; flex: none; display: flex; align-items: center; padding: 0 12px 1px 11px; gap: 7px; font: 12px "Open Sans", sans-serif; letter-spacing: -.2px; color: #fff; background: linear-gradient(#b267bd, #b267bd) right center / 1px 20px no-repeat; }
.tab.active { background: #35363a; border-radius: 8px 8px 0 0; }
.tab.last { background: none; }
.tab .fav { width: 17px; height: 17px; }
.fav.onwhite { background: #fff; }
.tab.bare { padding-left: 11px; }
.tab span { flex: 1; overflow: hidden; white-space: nowrap; }
.tab .fade { -webkit-mask-image: linear-gradient(90deg, #000 88%, transparent); mask-image: linear-gradient(90deg, #000 88%, transparent); }
.tab .x { width: 9px; height: 9px; }
.newtab { margin-left: 16px; }
.winctl { margin: 0 16px 6px auto; }

.toolbar { height: 37px; flex: none; background: #35363a; border-bottom: 1px solid #2a2021; display: flex; align-items: center; padding: 0 20px 1px 15px; }
.omnibox { flex: 1; height: 28px; margin: 0 12px 0 -3px; border-radius: 14px; background: #202124; display: flex; align-items: center; padding: 0 9px 0 11px; font: 14px "Open Sans", sans-serif; color: #fff; letter-spacing: -.3px; }
.secure { margin-left: 9px; padding-right: 8px; border-right: 1px solid #777; line-height: 16px; }
.url { margin-left: 9px; color: #9aa0a6; letter-spacing: -.26px; }
.url b { font-weight: 400; color: #fff; }
.obicons { margin-left: auto; }
.avatar { margin-right: 19px; }

.page { height: 969px; flex: none; display: flex; }
.content { width: 1903px; display: flex; flex-direction: column; background-color: #e6e6e6; background-image: repeating-linear-gradient(90deg, rgba(0,0,0,.018) 0 1px, transparent 1px 3px), repeating-linear-gradient(rgba(255,255,255,.25) 0 1px, transparent 1px 3px); }
.scroll { width: 17px; background: #f1f1f1; }
.menubar { height: 45px; flex: none; background: #f2f2f2; border: 1px solid #d0d0d0; display: flex; align-items: center; padding: 0 24px 2px 30px; }
.logo { font-family: "Open Sans", sans-serif; }
.menu { display: flex; font-size: 11.2px; color: #777; }
.menu.left { margin-left: 77px; gap: 23.7px; }
.menu.right { margin-left: auto; gap: 22px; }
.mail { letter-spacing: -.2px; }
i { display: inline-block; border: 2.500px solid transparent; border-top: 3px solid #666; border-bottom: 0; vertical-align: 2px; margin-left: 1.5px; }

.project { height: 30px; flex: none; margin: 8px 8px 0 7px; background: #8fc202; display: flex; align-items: flex-start; padding: 3px 3px 0 7.5px; gap: 4px; }
.project h1 { width: 193.5px; font-size: 16px; line-height: 27px; letter-spacing: .04px; color: #fff; }
.btn { height: 23px; flex: none; padding: 0 0 2px; font: 11px Roboto, sans-serif; white-space: nowrap; color: #444; border: 1px solid #c6c6c6; border-radius: 3px; background: linear-gradient(#fff, #e6e6e6); }
.project .btn { font-size: 10.5px; padding-bottom: 3px; }
.btn.off { color: #888; background: #ececec; border-color: #d4d4d4; }
.project .off { background: #c7dc8a; border-color: #b5d068; color: #777c62; }
.project .push { margin-left: auto; }
.w60 { width: 60px; } .w74 { width: 74px; } .w82 { width: 82px; } .w42 { width: 42px; } .w52 { width: 52px; }
.w52b { width: 52px; } .w43 { width: 44px; }

.columns { display: flex; gap: 7px; margin: 7px 0 0 11px; height: 855px; flex: none; }
.panel { background: #f8f9f3; border: 1px solid #cdcdcd; display: flex; flex-direction: column; }
.panel h2 { height: 26px; flex: none; background: #ccdcaa; border-bottom: 1px solid #a9b78d; font-size: 12px; line-height: 27px; padding-left: 9px; font-weight: 700; }
aside { width: 193px; }
.blocks { height: 501px; }
.pane { margin: 6px 0 0 5px; width: 180px; height: 432px; display: grid; grid-template: 415px 17px / 163px 17px; flex: none; }
.tree { overflow: hidden; }
.vsb, .hsb { background: #f1f1f1; }
.corner { background: #dcdcdc; }
.row { display: flex; align-items: center; white-space: nowrap; font-size: 11.1px; }
.row span { padding-top: 1px; }
.row .tg { width: 9px; height: 9px; margin-top: -3px; }
.row .ic { margin-top: -6px; margin-right: 2px; }
.builtin { height: 16px; padding-left: 5px; gap: 10px; margin-bottom: 4px; }
.builtin .tg { margin-top: 0; }
.builtin span { padding-top: 0; }
.cat { height: 24.6px; padding-left: 42px; gap: 1px; }
.sw { width: 13px; height: 13px; border: 1px solid #111; outline: 1px solid #d3d8e8; margin-top: -5px; margin-right: 1px; }
.sw.control { background: #ccab4b; } .sw.logic { background: #8ab656; } .sw.math { background: #4f87c4; } .sw.text { background: #c4426e; } .sw.lists { background: #58b5dd; } .sw.dict { background: #2b1599; } .sw.colors { background: #8e8e8e; } .sw.vars { background: #dc743a; } .sw.procs { background: #8f6998; }
.screen { height: 21.5px; padding-left: 5px; }
.screen .ic { margin: -10px 4px 0 13px; }
.harr { height: 21px; padding-left: 19px; }
.harr .ic, .tarr .ic { margin-left: 12px; margin-right: 2px; }
.tarr { height: 24px; padding-left: 19px; }
.leaf { padding-left: 55px; }
.note { padding-left: 41px; }
.h22 { height: 22px; } .h24 { height: 24px; } .h26 { height: 26px; }
.acts { display: flex; gap: 4px; margin: 3px 0 0 46px; }
.media { height: 112px; margin-top: 7px; }
.file { display: flex; align-items: center; gap: 1px; padding-left: 31px; height: 25px; margin-top: 7px; font-size: 11.1px; }
.file svg { margin-top: -5px; }
.file.two { margin-top: 0; height: 25px; gap: 2px; }
.up { width: 78px; margin: -1px 0 0 56px; }
.viewer { width: 1681px; }
.workspace { margin: 6px 0 0 5px; width: 1668px; height: 816px; border: 1px solid #dedede; background: #fff; flex: none; }
footer { margin-top: 11px; flex: 1; background: linear-gradient(#fdfdfd, #f0f0f0); text-align: center; font-size: 11.9px; line-height: 19px; color: #888; overflow: hidden; padding-right: 2px; }

.control { fill: #b18e35; } .control .lt { fill: #d0bb86; } .control .dk { fill: #8e722a; }
.logic { fill: #77ab41; } .logic .lt { fill: #a0c47a; } .logic .dk { fill: #5f8934; }
.prop { fill: #439970; } .prop .lt { fill: #7bb89b; } .prop .dk { fill: #367a5a; }
.str { fill: #b32d5e; } .str .lt { fill: #ca6c8e; } .str .dk { fill: #8f244b; }
.proc { fill: #7c5385; } .proc .lt { fill: #a387aa; } .proc .dk { fill: #63426a; }
.dk { transform: translate(2px, 2px); }
.dk + use { transform: translate(1px, 1px); }
.rim { fill: none; stroke-width: 1.500; } .rim .d { stroke: #5f8934; } .rim .l { stroke: #a0c47a; }
.field { fill: #fff; fill-opacity: .6; }
.bt, .ft, .q { font: 28px "Liberation Sans", Arial, sans-serif; fill: #fff; }
.ft { fill: #000; }
.q { font-size: 24px; text-anchor: middle; }
.wt { font: 12px Roboto, sans-serif; } .wt text { fill: #222; }

.taskbar { height: 40px; flex: none; display: flex; align-items: center; color: #fff; font: 12px "Open Sans", sans-serif; letter-spacing: -.2px; background: linear-gradient(90deg, #330a30, #35114f 10%, #360f50 15%, #2c0a38 19%, #350a38 22%, #2f1056 28%, #27104f 50%, #2c0d40 70%, #3a0a30 77%, #2f0e40 85%, #3a0a28 92%, #3a0828); }
.tray { margin-left: 895px; }
.lang { width: 48px; text-align: center; margin-left: -6px; }
.clock { width: 68px; text-align: center; line-height: 18px; margin: 0 0 0 -4px; }
.notif { margin-left: 12px; }
```
